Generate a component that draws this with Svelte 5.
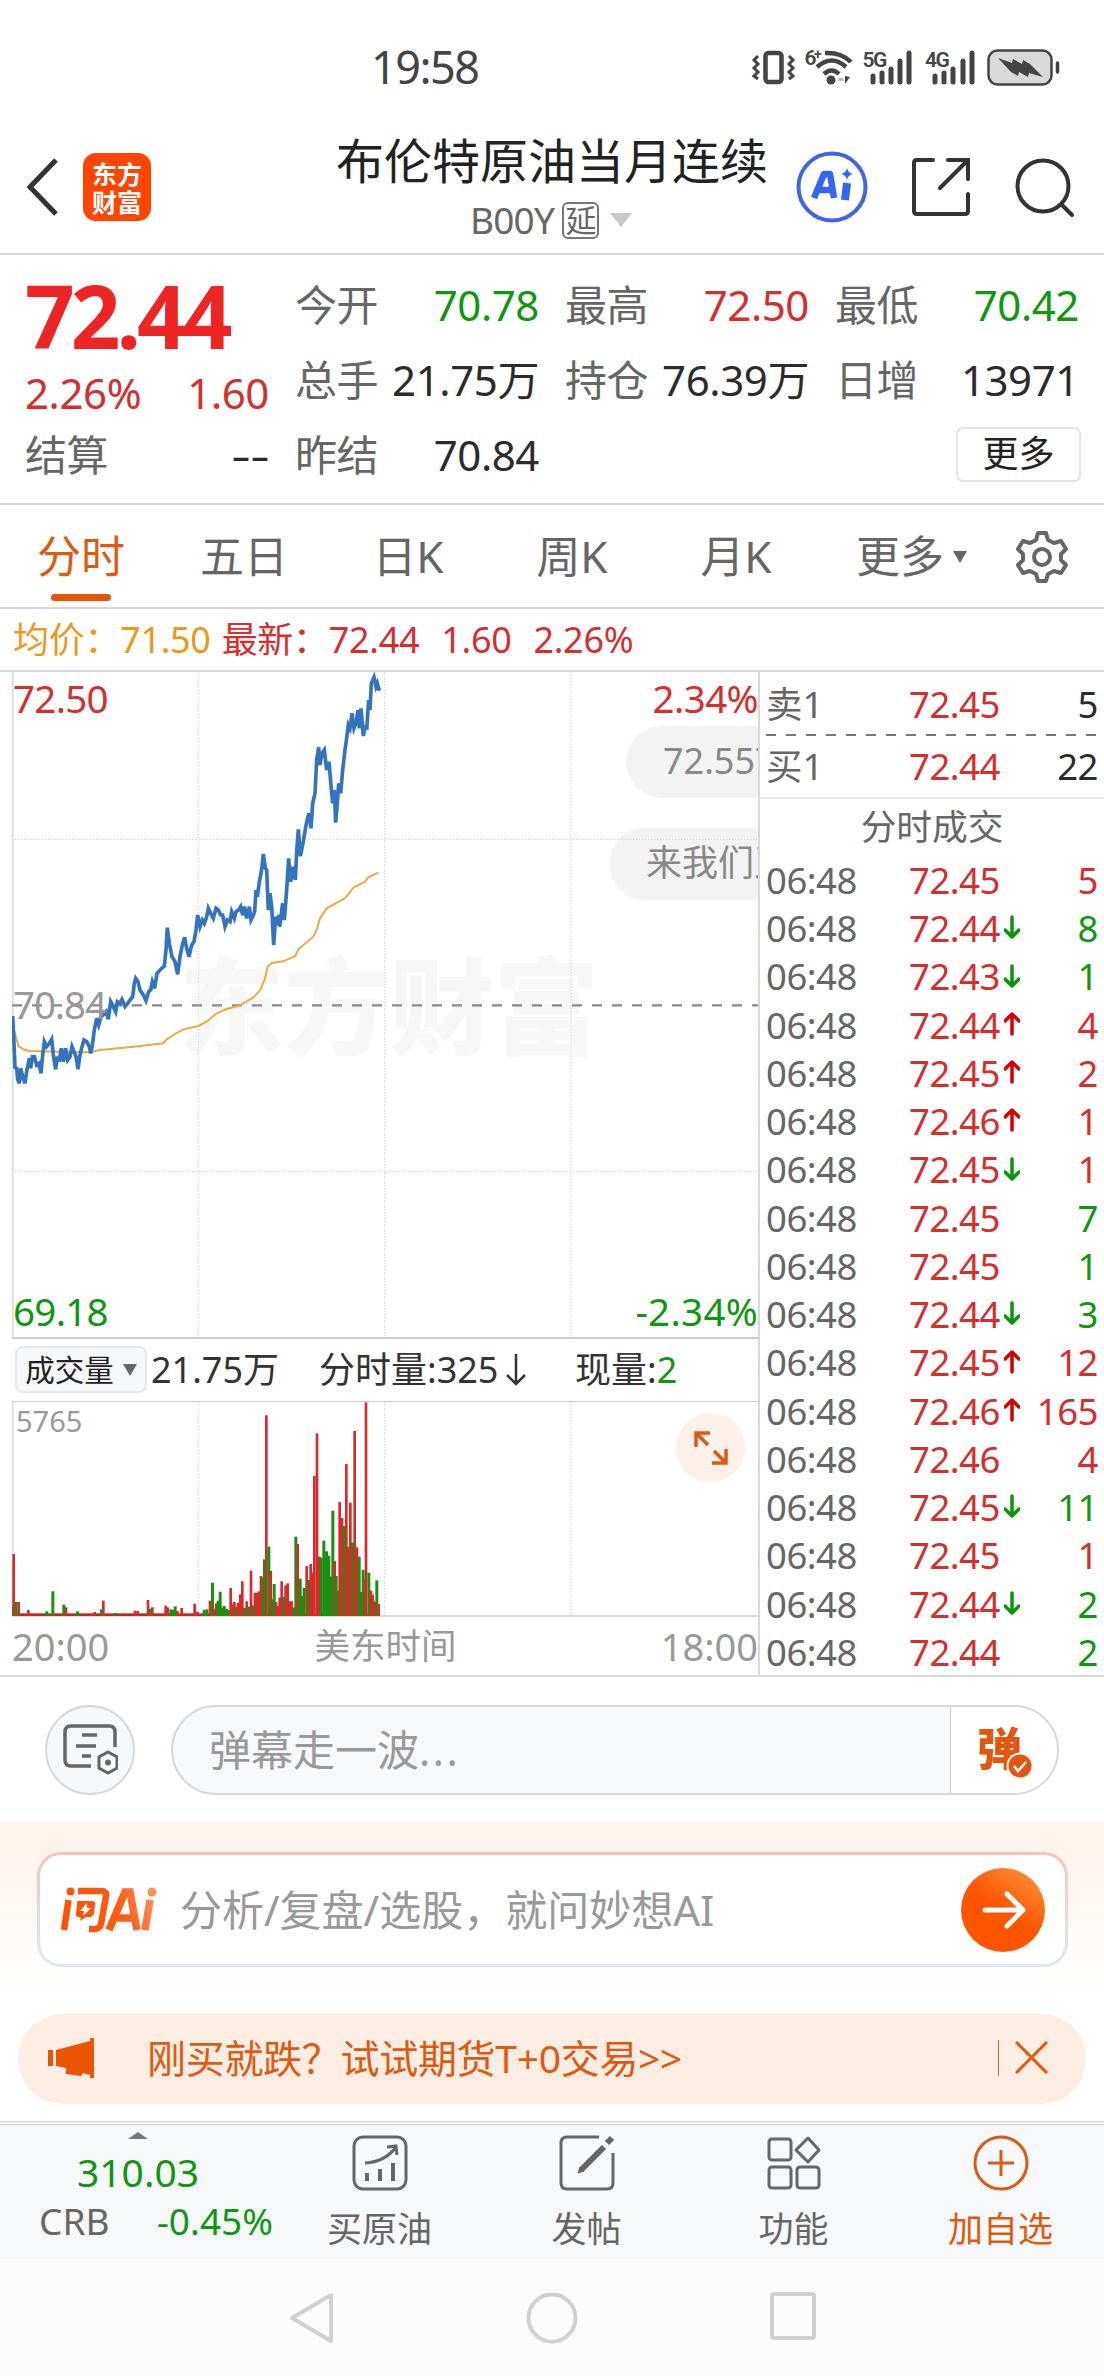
<script lang="ts">
  type Tone = 'red' | 'green' | 'dark';

  const quotes: { label: string; value: string; tone: Tone }[] = [
    { label: '今开', value: '70.78', tone: 'green' },
    { label: '最高', value: '72.50', tone: 'red' },
    { label: '最低', value: '70.42', tone: 'green' },
    { label: '总手', value: '21.75万', tone: 'dark' },
    { label: '持仓', value: '76.39万', tone: 'dark' },
    { label: '日增', value: '13971', tone: 'dark' },
    { label: '昨结', value: '70.84', tone: 'dark' },
  ];

  const tabs = ['分时', '五日', '日K', '周K', '月K'];
  let activeTab = $state('分时');

  // price, volume, tone, direction
  const ticks: [string, number, Tone, string][] = [
    ['72.45', 5, 'red', ''],
    ['72.44', 8, 'green', 'down'],
    ['72.43', 1, 'green', 'down'],
    ['72.44', 4, 'red', 'up'],
    ['72.45', 2, 'red', 'up'],
    ['72.46', 1, 'red', 'up'],
    ['72.45', 1, 'red', 'down'],
    ['72.45', 7, 'green', ''],
    ['72.45', 1, 'green', ''],
    ['72.44', 3, 'green', 'down'],
    ['72.45', 12, 'red', 'up'],
    ['72.46', 165, 'red', 'up'],
    ['72.46', 4, 'red', ''],
    ['72.45', 11, 'green', 'down'],
    ['72.45', 1, 'red', ''],
    ['72.44', 2, 'green', 'down'],
    ['72.44', 2, 'green', ''],
  ];

  // chart units are a third of a pixel
  const priceLine =
    '38,1068 42,1150 45,1222 50,1225 53,1258 58,1270 62,1225 68,1250 75,1270 80,1235 88,1195 92,1225 97,1190 103,1190 110,1215 117,1210 123,1240 128,1185 133,1145 140,1160 148,1150 155,1138 160,1185 167,1228 172,1190 177,1205 184,1165 190,1205 197,1165 203,1200 210,1190 216,1160 222,1175 228,1190 234,1228 240,1185 246,1160 252,1140 260,1145 268,1160 272,1180 277,1155 283,1110 290,1075 296,1095 303,1070 310,1065 318,1055 325,1078 332,1025 340,1040 347,1055 352,1025 360,1030 366,1018 375,1040 382,1032 390,1020 398,1010 403,970 407,955 414,965 420,990 430,1005 438,1022 446,995 452,990 457,965 464,985 471,940 480,930 493,918 498,870 502,803 508,850 516,890 525,905 533,943 540,890 547,855 554,832 560,865 567,890 575,855 582,845 588,810 593,765 600,800 607,780 613,790 620,770 625,745 632,760 640,775 648,745 655,750 662,765 668,765 675,800 682,780 690,785 695,755 703,775 708,755 716,750 722,740 728,765 733,740 740,775 748,740 753,780 758,770 764,755 768,690 772,710 778,665 784,635 790,582 796,625 800,630 805,750 810,700 815,740 821,855 827,770 831,795 836,765 839,800 848,730 853,780 860,690 866,595 872,665 878,620 886,660 890,575 895,508 901,588 908,555 914,520 920,485 927,460 933,505 938,430 945,400 950,300 956,262 960,315 966,280 973,270 980,330 987,305 992,365 998,430 1003,390 1007,488 1012,430 1016,370 1022,400 1028,330 1035,270 1040,235 1045,195 1050,205 1056,160 1062,205 1068,190 1074,150 1078,205 1083,145 1090,228 1096,195 1100,210 1106,120 1110,150 1114,70 1122,52 1128,80 1132,70 1138,92';
  const averageLine =
    '38,1100 48,1130 55,1158 70,1168 88,1173 180,1175 270,1177 300,1170 400,1160 490,1150 500,1138 525,1122 550,1108 595,1098 620,1085 650,1060 680,1047 715,1038 760,1013 782,988 795,955 803,920 815,909 850,904 886,888 895,868 940,830 950,810 960,775 980,745 1035,715 1060,683 1095,665 1105,652 1135,638';

  // x, height, r/g
  const volumes: [number, number, string][] = [
    [38, 28, 'g'], [41, 186, 'r'], [48, 42, 'g'], [56, 42, 'r'], [85, 18, 'r'], [140, 14, 'g'], [158, 74, 'g'],
    [191, 34, 'g'], [198, 26, 'r'], [232, 14, 'g'], [284, 12, 'r'], [304, 20, 'g'], [310, 46, 'r'], [346, 9, 'g'],
    [405, 16, 'r'], [413, 15, 'r'], [444, 48, 'r'], [451, 22, 'g'], [457, 26, 'r'], [497, 31, 'r'], [503, 26, 'r'],
    [512, 20, 'g'], [518, 18, 'g'], [525, 29, 'g'], [532, 15, 'r'], [545, 24, 'r'], [584, 37, 'r'], [592, 13, 'r'],
    [612, 18, 'g'], [620, 20, 'g'], [630, 46, 'r'], [637, 100, 'g'], [643, 20, 'r'], [649, 38, 'r'], [654, 46, 'g'],
    [660, 73, 'g'], [666, 25, 'g'], [672, 30, 'g'], [679, 22, 'g'], [685, 18, 'g'], [692, 84, 'r'], [698, 35, 'r'],
    [703, 42, 'r'], [709, 28, 'g'], [714, 40, 'r'], [721, 65, 'r'], [727, 104, 'r'], [733, 24, 'g'], [740, 44, 'r'],
    [747, 28, 'g'], [753, 136, 'r'], [760, 32, 'g'], [765, 70, 'r'], [771, 70, 'r'], [777, 74, 'r'], [783, 120, 'r'],
    [789, 115, 'g'], [793, 170, 'g'], [799, 602, 'r'], [806, 208, 'g'], [812, 135, 'r'], [818, 50, 'g'], [822, 96, 'g'],
    [828, 42, 'r'], [833, 30, 'r'], [839, 55, 'r'], [845, 104, 'r'], [851, 58, 'g'], [857, 92, 'r'], [863, 98, 'r'],
    [869, 44, 'r'], [875, 44, 'r'], [881, 26, 'g'], [887, 238, 'g'], [893, 216, 'r'], [900, 112, 'g'], [906, 60, 'g'],
    [912, 84, 'g'], [920, 150, 'r'], [926, 108, 'g'], [932, 156, 'r'], [939, 130, 'r'], [943, 420, 'r'], [951, 548, 'r'],
    [958, 178, 'r'], [963, 175, 'g'], [971, 226, 'g'], [979, 194, 'g'], [986, 180, 'g'], [992, 118, 'g'], [998, 316, 'g'],
    [1004, 165, 'r'], [1008, 120, 'g'], [1013, 76, 'g'], [1019, 342, 'r'], [1026, 294, 'r'], [1032, 270, 'g'],
    [1039, 456, 'r'], [1045, 207, 'r'], [1051, 340, 'r'], [1057, 220, 'g'], [1064, 555, 'r'], [1071, 206, 'r'],
    [1077, 178, 'g'], [1083, 72, 'g'], [1089, 138, 'g'], [1094, 110, 'r'], [1098, 641, 'r'], [1106, 130, 'g'],
    [1113, 76, 'r'], [1118, 64, 'r'], [1124, 44, 'r'], [1130, 107, 'g'], [1136, 36, 'r'],
  ];
</script>

{#snippet arrow(dir: string)}
  <svg class="arrow" width="16" height="24" viewBox="0 0 16 24">
    {#if dir === 'up'}
      <path d="M8 22V2M1 9l7-7 7 7" stroke="#d40000" />
    {:else if dir === 'down'}
      <path d="M8 2v20M1 15l7 7 7-7" stroke="#0a950a" />
    {/if}
  </svg>
{/snippet}

<main>
  <div class="status">
    <span class="clock">19:58</span>
    <svg class="status-icons" width="310" height="40" viewBox="750 48 310 40" fill="none" stroke="#444">
      <rect x="765.500" y="53" width="16" height="29" rx="3" stroke-width="4.500" />
      <path d="M758 56l-4 4 4 4-4 4 4 4-4 4 4 3M789 56l4 4-4 4 4 4-4 4 4 4-4 3" stroke-width="3" />
      <path d="M825 53q16-1 26 9M817 67q15-13 29 0M824 74q8-7 15 0" stroke-width="4.500" />
      <circle cx="831" cy="80" r="4.500" fill="#444" stroke="none" />
      <path d="M841 78v3" stroke="#bbb" stroke-width="5" />
      <path d="M845 76v8l5-7z" fill="#444" stroke="none" />
      <g stroke-width="5" stroke-linecap="round">
        <path d="M873 82v-6M882 82v-9M891 82v-13M900 82v-21M909 82V53" />
        <path d="M935 82v-6M944 82v-9M953 82v-13M963 82v-21M972 82V53" />
      </g>
      <rect x="988.500" y="50.500" width="63" height="34" rx="9" fill="#d9d9d9" stroke-width="2.500" />
      <path d="M1057.500 63v9" stroke-width="3.500" stroke-linecap="round" />
      <path d="M998 58l14 5 1-4 9 5 1-4 7 4 13 13-14-4-1 4-9-5-1 4-7-4z" fill="#444" stroke="none" />
      <g class="net"><text x="804.500" y="65">6</text><text class="plus" x="814" y="59">+</text><text x="862.500" y="67">5G</text><text x="925" y="67">4G</text></g>
    </svg>
  </div>

  <header>
    <svg class="back" width="36" height="60" viewBox="0 0 36 60"><path d="M32 3L6 30l26 27" fill="none" stroke="#333" stroke-width="5" /></svg>
    <div class="logo"><span>东方</span><span>财富</span></div>
    <div class="title">
      <h1>布伦特原油当月连续</h1>
      <div class="code">B00Y<span class="delay">延</span><i class="tri"></i></div>
    </div>
    <div class="actions">
      <svg width="72" height="72" viewBox="0 0 72 72">
        <circle cx="36" cy="36" r="33.500" fill="#fff" stroke="#3f66e0" stroke-width="4" />
        <path d="M18 47L28 23h6l4 24M22 39h13" fill="none" stroke="#3565f5" stroke-width="6.500" stroke-linejoin="round" />
        <path d="M51 32l-2 17" stroke="#3565f5" stroke-width="8" />
        <path d="M51 17q1 5 6 6-5 1-6 6-1-5-6-6 5-1 6-6z" fill="#3565f5" />
      </svg>
      <svg class="share" width="60" height="60" viewBox="0 0 60 60" fill="none" stroke="#333" stroke-width="4" stroke-linecap="round">
        <path d="M22 3H6q-3 0-3 3v48q0 3 3 3h48q3 0 3-3V37M37 3h20v19M57 3L29 31" />
      </svg>
      <svg width="62" height="62" viewBox="0 0 62 62" fill="none" stroke="#333" stroke-width="4" stroke-linecap="round">
        <circle cx="29" cy="30" r="25.500" /><path d="M48 49l10 10" />
      </svg>
    </div>
  </header>

  <section class="quote">
    <div class="latest">
      <strong>72.44</strong>
      <div class="pair red"><span>2.26%</span><span>1.60</span></div>
      <div class="pair"><span class="label">结算</span><span class="dark none">--</span></div>
    </div>
    <div class="grid">
      {#each quotes as q}
        <div class="pair"><span class="label">{q.label}</span><span class={q.tone}>{q.value}</span></div>
      {/each}
      <button class="more">更多</button>
    </div>
  </section>

  <nav class="tabs">
    {#each tabs as tab}
      <button class:active={tab === activeTab} onclick={() => (activeTab = tab)}>{tab}</button>
    {/each}
    <button class="more-tab">更多<i class="tri"></i></button>
    <svg class="gear" width="56" height="56" viewBox="0 0 56 56" fill="none" stroke="#666" stroke-width="4" stroke-linejoin="round">
      <path d="M24 4h8l2 7 6 3 7-2 5 8-5 5v6l5 5-5 8-7-2-6 3-2 7h-8l-2-7-6-3-7 2-5-8 5-5v-6l-5-5 5-8 7 2 6-3z" />
      <circle cx="28" cy="28" r="8" />
    </svg>
  </nav>

  <div class="summary">
    <span class="avg">均价：71.50</span><span class="last">最新：72.44</span><span>1.60</span><span>2.26%</span>
  </div>

  <section class="market">
    <div class="charts">
      <div class="price">
        <span class="watermark">东方财富</span>
        <div class="bubble first">72.557</div>
        <div class="bubble second">来我们又</div>
        <svg width="747" height="666" viewBox="36 36 2241 1998" fill="none">
          <g stroke="#d8d8d8" stroke-width="4" stroke-dasharray="4 5">
            <path d="M595 36v1998M1154 36v1998M1713 36v1998M36 538h2241M36 1534h2241" />
          </g>
          <path d="M38 33v2001" stroke="#ddd" stroke-width="6" />
          <path d="M36 1036h2241" stroke="#888" stroke-width="7" stroke-dasharray="30 30" />
          <polyline points={averageLine} stroke="#e9ab45" stroke-width="6" />
          <polyline points={priceLine} stroke="#3374bd" stroke-width="11" />
        </svg>
        <span class="mark top red">72.50</span>
        <span class="mark top right red">2.34%</span>
        <span class="mark middle">70.84</span>
        <span class="mark bottom green">69.18</span>
        <span class="mark bottom right green">-2.34%</span>
      </div>
      <div class="volume-head">
        <button class="indicator">成交量<i class="tri"></i></button>
        <span class="total">21.75万</span>
        <span class="minute">分时量:325<svg width="22" height="34" viewBox="0 0 22 34"><path d="M11 1v30M2 22l9 9 9-9" fill="none" stroke="#333" stroke-width="2.500" /></svg></span>
        <span>现量:<b class="green">2</b></span>
      </div>
      <div class="volume">
        <svg width="747" height="214" viewBox="36 0 2241 642">
          <path d="M595 0v642M1154 0v642M1713 0v642" stroke="#d8d8d8" stroke-width="4" stroke-dasharray="4 5" />
          <path d="M38 0v642" stroke="#ddd" stroke-width="6" />
          <rect x="36" y="634" width="1104" height="8" fill="#c0281c" />
          {#each volumes as [x, h, c]}
            <rect x={x - 4} y={642 - h} width={c === 'r' ? 8 : 9} height={h} fill={c === 'r' ? '#d82a2a' : '#1b8f12'} />
          {/each}
        </svg>
        <span class="max">5765</span>
        <span class="expand">
          <svg width="36" height="36" viewBox="0 0 36 36" fill="none" stroke="#dd5a12" stroke-width="3.500">
            <path d="M3 17V3h14M3 3l12 12M33 19v14H19M33 33L21 21" />
          </svg>
        </span>
      </div>
      <div class="axis"><span>20:00</span><span class="zone">美东时间</span><span>18:00</span></div>
    </div>

    <aside>
      <div class="row book"><span class="label">卖1</span><span class="red">72.45</span><span class="dark qty">5</span></div>
      <svg class="dash" width="332" height="2"><path d="M0 1h332" stroke="#777" stroke-width="2" stroke-dasharray="10 10" /></svg>
      <div class="row book bid"><span class="label">买1</span><span class="red">72.44</span><span class="dark qty">22</span></div>
      <h2>分时成交</h2>
      {#each ticks as [price, qty, tone, dir]}
        <div class="row"><span class="label">06:48</span><span class="red">{price}</span>{@render arrow(dir)}<span class="qty {tone}">{qty}</span></div>
      {/each}
    </aside>
  </section>

  <div class="danmu">
    <button class="round">
      <svg width="56" height="56" viewBox="0 0 56 56" fill="none" stroke="#666" stroke-width="3.500">
        <path d="M29 44H9q-6 0-6-6V10q0-6 6-6h38q6 0 6 6v15M20 13h15M14 24h20M20 34h9" />
        <path d="M46 30l9 5v11l-9 5-9-5V35z" stroke-width="3" /><circle cx="46" cy="40.500" r="3" fill="#666" stroke="none" />
      </svg>
    </button>
    <div class="field">
      <span>弹幕走一波<span class="dots">...</span></span>
      <div class="send">
        弹
        <svg width="28" height="28" viewBox="0 0 28 28"><circle cx="14" cy="14" r="12.500" fill="#e2570f" stroke="#fff" stroke-width="2" /><path d="M8 14l4 5 8-9" fill="none" stroke="#fff" stroke-width="2.500" /></svg>
      </div>
    </div>
  </div>

  <section class="ask">
    <div class="card">
      <svg width="98" height="46" viewBox="0 0 98 46" fill="none" stroke="url(#ask)" stroke-width="7">
        <defs>
          <linearGradient id="ask" gradientUnits="userSpaceOnUse" x1="0" y1="40" x2="98" y2="0">
            <stop offset="0" stop-color="#ff5000" /><stop offset="0.600" stop-color="#ff5d15" /><stop offset="1" stop-color="#ff9a6a" />
          </linearGradient>
        </defs>
        <path d="M8.500 13L4 43M18 4h23q6 0 5 5l-5 28q-1 5-7 5h-5" stroke-width="6.500" />
        <circle cx="10.500" cy="4.500" r="4" fill="url(#ask)" stroke="none" />
        <path d="M18 14h14q4 0 3 4l-1 8q-1 4-4 4h-4l-6 4 1-4h-2q-4 0-3-4l1-8q0-4 1-4z" fill="url(#ask)" stroke="none" />
        <path d="M27 16l-7 8h4l-1 5 8-8h-4z" fill="#fff" stroke="none" />
        <path d="M49 43L65 5h5l7 38M57 31h17M90 13l-5 30" stroke-width="7.500" />
        <circle cx="92" cy="5" r="4.500" fill="url(#ask)" stroke="none" />
      </svg>
      <span>分析/复盘/选股，就问妙想AI</span>
      <button class="go"><svg width="84" height="84" viewBox="0 0 84 84" fill="none" stroke="#fff" stroke-width="5" stroke-linecap="round" stroke-linejoin="round"><path d="M24 42h38M46 26l16 16-16 16" /></svg></button>
    </div>
  </section>

  <div class="banner">
    <svg width="48" height="40" viewBox="0 0 48 40" fill="#e95504"><path d="M0 12h5v16H0zM8 12L42 3V0h4v40h-4v-3l-7-2-2 3-15-2v-6l-10-2z" /></svg>
    <span>刚买就跌？试试期货T+0交易&gt;&gt;</span>
    <i></i>
    <svg width="33" height="33" viewBox="0 0 33 33"><path d="M1 1l31 31M32 1L1 32" stroke="#dd5a12" stroke-width="3" /></svg>
  </div>

  <footer>
    <div class="index">
      <i class="caret"></i>
      <span class="green value">310.03</span>
      <div class="change"><span>CRB</span><span class="green">-0.45%</span></div>
    </div>
    <div class="item">
      <svg width="56" height="56" viewBox="0 0 56 56" fill="none" stroke="#666" stroke-width="3">
        <rect x="2" y="2" width="52" height="52" rx="9" /><path d="M13 28q20-1 31-16M35 12l9-1 1 9" /><path d="M15 38v8M28 34v12M41 28v18" stroke-width="4" />
      </svg>
      <span>买原油</span>
    </div>
    <div class="item">
      <svg width="56" height="56" viewBox="0 0 56 56" fill="none" stroke="#666" stroke-width="3">
        <path d="M40 2H8q-6 0-6 6v40q0 6 6 6h40q6 0 6-6V18" /><path d="M22 35l23-23M48 8l5-5" stroke-width="6" /><path d="M19 38l2-6 4 4z" fill="#666" stroke-width="1" />
      </svg>
      <span>发帖</span>
    </div>
    <div class="item">
      <svg width="56" height="56" viewBox="0 0 56 56" fill="none" stroke="#666" stroke-width="3">
        <rect x="3" y="4" width="22" height="21" rx="3" /><rect x="3" y="32" width="22" height="21" rx="3" /><rect x="31" y="32" width="22" height="21" rx="3" />
        <path d="M42 3l11 12-11 12-12-12z" stroke-linejoin="round" />
      </svg>
      <span>功能</span>
    </div>
    <div class="item add">
      <svg width="56" height="56" viewBox="0 0 56 56" fill="none" stroke="#dd5a12" stroke-width="3"><circle cx="28" cy="28" r="26" /><path d="M28 15v26M15 28h26" /></svg>
      <span>加自选</span>
    </div>
  </footer>

  <div class="system">
    <svg width="46" height="52" viewBox="0 0 46 52"><path d="M43 3v46L4 26z" /></svg>
    <svg width="52" height="52" viewBox="0 0 52 52"><circle cx="26" cy="26" r="23.500" /></svg>
    <svg width="46" height="48" viewBox="0 0 46 48"><rect x="2" y="2" width="42" height="44" rx="2" /></svg>
  </div>
</main>

<style>
  :global(body) {
    background: #fff;
  }
  main {
    width: 1104px;
    height: 2376px;
    display: flex;
    flex-direction: column;
    overflow: hidden;
    background: #fff;
    color: #333;
    font-family: "Noto Sans", "Noto Sans CJK SC", sans-serif;
    line-height: 1;
  }
  main * {
    box-sizing: border-box;
  }
  button {
    border: 0;
    padding: 0;
    background: none;
    color: inherit;
    font: inherit;
  }
  svg {
    display: block;
    flex: none;
  }
  .red { color: #d42f2f; }
  .green { color: #119611; }
  .dark { color: #2b2b2b; }
  .label { color: #666; }
  .tri {
    display: inline-block;
    border: 7px solid transparent;
    border-top: 12px solid #666;
    border-bottom: 0;
  }

  .status {
    height: 106px;
    flex: none;
    display: flex;
    align-items: center;
    padding: 30px 44px 0 371px;
    justify-content: space-between;
  }
  .clock {
    font-size: 45px;
    letter-spacing: -1.5px;
    margin-top: -3px;
    color: #444;
  }
  .net {
    font: 600 21px "Roboto", sans-serif;
    fill: #444;
    stroke: none;
    letter-spacing: -1.5px;
  }
  .plus { font-size: 14px; }

  header {
    height: 149px;
    flex: none;
    display: flex;
    border-bottom: 2px solid #d8d8d8;
    padding-left: 24px;
  }
  .back { margin-top: 51px; }
  .logo {
    width: 68px;
    height: 68px;
    margin: 47px 0 0 23px;
    border-radius: 13px;
    background: #ff4500;
    color: #fff;
    font: 700 25px/28px "Noto Sans CJK SC", sans-serif;
    display: flex;
    flex-direction: column;
    align-items: center;
    justify-content: center;
  }
  .title {
    width: 434px;
    margin: 29px 0 0 185px;
  }
  h1 {
    margin: 0;
    font-size: 48px;
    line-height: 52px;
    font-weight: 400;
    color: #222;
    white-space: nowrap;
  }
  .code {
    display: flex;
    align-items: center;
    justify-content: center;
    margin: 14px 0 0 -4px;
    font-size: 37px;
    line-height: 38px;
    letter-spacing: -0.8px;
    color: #666;
  }
  .delay {
    width: 37px;
    height: 37px;
    margin: 0 11px 0 8px;
    border: 2px solid #777;
    border-radius: 6px;
    font-size: 31px;
    line-height: 32px;
    text-align: center;
  }
  .code .tri {
    border-width: 14px 11px 0;
    border-top-color: #c8c8c8;
  }
  .actions {
    display: flex;
    align-items: center;
    margin: 18px 0 0 26px;
    height: 126px;
  }
  .share { margin: 0 43px 0 43px; }

  .quote {
    height: 250px;
    flex: none;
    display: flex;
    border-bottom: 2px solid #d8d8d8;
    padding: 12px 25px 0;
    font-size: 42px;
  }
  .latest {
    width: 244px;
    margin-right: 26px;
  }
  .latest strong {
    display: block;
    height: 100px;
    font-size: 87px;
    line-height: 97px;
    letter-spacing: -4px;
    color: #ee2525;
  }
  .latest .pair { height: 51px; }
  .latest .pair + .pair { height: 74px; }
  .pair {
    display: flex;
    align-items: center;
    justify-content: space-between;
    letter-spacing: -0.4px;
  }
  .none {
    transform: scaleX(1.45);
    transform-origin: right;
  }
  .grid {
    flex: 1;
    display: grid;
    grid-template-columns: repeat(3, 244px);
    grid-auto-rows: 75px;
    column-gap: 26px;
  }
  .more {
    grid-column: 3;
    justify-self: end;
    align-self: center;
    width: 125px;
    height: 55px;
    margin-right: -2px;
    border: 2px solid #e4e4e4;
    border-radius: 7px;
    padding-bottom: 2px;
    font-size: 36px;
    color: #222;
  }

  .tabs {
    height: 104px;
    flex: none;
    display: flex;
    border-bottom: 2px solid #d8d8d8;
    font-size: 44px;
    color: #666;
  }
  .tabs button {
    position: relative;
    width: 164px;
    height: 104px;
    padding-bottom: 2px;
  }
  .tabs button:first-child { width: 162px; }
  .tabs .active { color: #dd5a12; }
  .active::after {
    content: "";
    position: absolute;
    left: 51px;
    bottom: 8px;
    width: 60px;
    height: 7px;
    border-radius: 4px;
    background: #e55509;
  }
  .tabs .more-tab {
    width: 192px;
    padding-right: 5px;
  }
  .more-tab .tri {
    margin-left: 9px;
    vertical-align: 10px;
  }
  .gear { margin: 24px 0 0 4px; }

  .summary {
    height: 61px;
    flex: none;
    display: flex;
    align-items: center;
    padding-left: 13px;
    font-size: 36px;
    letter-spacing: -0.3px;
    color: #d42f2f;
    white-space: nowrap;
  }
  .summary span { margin-right: 22px; }
  .summary .avg {
    margin-right: 11px;
    color: #e99a1d;
  }

  .market {
    height: 1007px;
    flex: none;
    display: flex;
    border-top: 2px solid #d8d8d8;
    border-bottom: 2px solid #d8d8d8;
  }
  .charts {
    width: 760px;
    padding-left: 12px;
    border-right: 2px solid #d8d8d8;
  }
  .price {
    position: relative;
    height: 667px;
    border-bottom: 2px solid #ccc;
    overflow: hidden;
  }
  .price svg {
    position: relative;
  }
  .mark {
    position: absolute;
    left: 1px;
    font-size: 38.5px;
    line-height: 40px;
    letter-spacing: -0.7px;
  }
  .mark.right {
    left: auto;
    right: 0;
    letter-spacing: -0.6px;
  }
  .mark.top { top: 6px; }
  .mark.middle {
    top: 312px;
    color: #999;
    letter-spacing: -1.1px;
  }
  .mark.bottom { bottom: 6px; }
  .mark.bottom.right { letter-spacing: 0.3px; }
  .bubble {
    position: absolute;
    right: 0;
    height: 72px;
    padding-left: 37px;
    border-radius: 36px 0 0 36px;
    background: #f3f3f3;
    color: #888;
    font-size: 36px;
    line-height: 69px;
    white-space: nowrap;
    overflow: hidden;
  }
  .first {
    top: 54px;
    width: 132px;
  }
  .second {
    top: 156px;
    width: 149px;
  }
  .watermark {
    position: absolute;
    left: 167px;
    top: 276px;
    font: 900 105px/105px "Noto Sans CJK SC", sans-serif;
    color: #f7f7f7;
  }
  .volume-head {
    height: 62px;
    display: flex;
    align-items: center;
    padding: 0 0 1px 3px;
    font-size: 36px;
  }
  .indicator {
    width: 132px;
    height: 47px;
    margin-right: 4px;
    border: 2px solid #e5e7ea;
    border-radius: 8px;
    background: #f6f7f9;
    font-size: 29.5px;
    color: #222;
    white-space: nowrap;
  }
  .indicator .tri {
    margin-left: 9px;
    vertical-align: 5px;
  }
  .total { width: 168px; }
  .minute {
    display: flex;
    align-items: center;
    gap: 7px;
    width: 256px;
  }
  .volume-head b { font-weight: 400; }
  .volume {
    position: relative;
    height: 216px;
    border-top: 1px solid #ccc;
    border-bottom: 2px solid #ddd;
  }
  .max {
    position: absolute;
    left: 4px;
    top: 4px;
    font-size: 29px;
    line-height: 30px;
    color: #999;
  }
  .expand {
    position: absolute;
    right: 13px;
    top: 11px;
    width: 69px;
    height: 69px;
    border-radius: 50%;
    background: #fdf0e8;
    display: flex;
    align-items: center;
    justify-content: center;
  }
  .axis {
    display: flex;
    justify-content: space-between;
    align-items: center;
    height: 58px;
    font-size: 38px;
    color: #999;
  }
  .zone {
    font-size: 35.5px;
    margin-left: 1px;
  }
  aside {
    flex: 1;
    padding-left: 6px;
    font-size: 36.5px;
  }
  .row {
    height: 48.25px;
    display: flex;
    align-items: center;
    padding-right: 6px;
    letter-spacing: -0.5px;
  }
  .row .label { width: 143px; }
  .book { height: 62px; }
  .book .label { letter-spacing: 0; }
  .row.book:first-child { padding-top: 3px; }
  .bid { height: 61px; }
  .arrow {
    margin: -2px 0 0 4px;
    fill: none;
    stroke-width: 3.5;
    stroke-linecap: round;
    stroke-linejoin: round;
  }
  .qty { margin-left: auto; }
  h2 {
    margin: 0 0 0 -6px;
    height: 59px;
    border-top: 2px solid #e8e8e8;
    text-align: center;
    font-size: 35.7px;
    line-height: 55px;
    font-weight: 400;
    color: #666;
  }

  .danmu {
    height: 145px;
    flex: none;
    display: flex;
    padding: 28px 45px 0;
    gap: 36px;
  }
  .round {
    width: 90px;
    height: 90px;
    border: 2px solid #d5d8dc;
    border-radius: 50%;
    background: #f6f7f9;
    display: flex;
    align-items: center;
    justify-content: center;
  }
  .field {
    width: 888px;
    height: 90px;
    border: 2px solid #d5d8dc;
    border-radius: 45px;
    background: #f6f8fa;
    display: flex;
    align-items: center;
    justify-content: space-between;
    padding-left: 36px;
    overflow: hidden;
    font-size: 42px;
    color: #999;
  }
  .dots { letter-spacing: 2.5px; }
  .send {
    position: relative;
    width: 107px;
    height: 86px;
    padding-left: 26px;
    border-left: 1px solid #ccc;
    background: #fff;
    color: #e2570f;
    font-size: 45px;
    font-weight: 900;
    line-height: 84px;
  }
  .send svg {
    position: absolute;
    left: 55px;
    top: 45px;
  }

  .ask {
    height: 192px;
    flex: none;
    padding: 30px 36px 0 37px;
    background: linear-gradient(#fff1eb, #fff 92%);
  }
  .card {
    height: 115px;
    border: 3px solid transparent;
    border-radius: 24px;
    background: linear-gradient(#fff, #fff) padding-box, linear-gradient(#f3c6bd, #dfe8f3) border-box;
    display: flex;
    align-items: center;
    padding: 0 20px;
    font-size: 42px;
    color: #999;
  }
  .card span { margin-left: 22px; }
  .go {
    margin-left: auto;
    border-radius: 50%;
    background: linear-gradient(35deg, #ff5500 50%, #ff9a48);
  }

  .banner {
    height: 90px;
    flex: none;
    margin: 0 18px;
    padding: 0 38px 3px 30px;
    border-radius: 45px;
    background: #fcede3;
    display: flex;
    align-items: center;
    font-size: 39px;
    color: #dd5a12;
  }
  .banner span {
    margin-left: 51px;
    letter-spacing: -0.3px;
  }
  .banner i {
    width: 1px;
    height: 36px;
    margin: 0 16px 0 auto;
    background: #c86a35;
  }

  footer {
    height: 138px;
    flex: none;
    margin-top: 17px;
    display: flex;
    border-top: 4px double #d0d2d5;
    background: #f6f8fa;
    color: #666;
  }
  .index {
    width: 276px;
    display: flex;
    flex-direction: column;
    align-items: center;
  }
  .caret {
    margin-top: 7px;
    border: 10px solid transparent;
    border-bottom: 7px solid #777;
    border-top: 0;
  }
  .value {
    margin-top: 13px;
    font-size: 39px;
  }
  .change {
    align-self: stretch;
    display: flex;
    justify-content: space-between;
    padding: 0 3px 0 39px;
    margin-top: 11px;
    font-size: 37px;
  }
  .item {
    width: 207px;
    display: flex;
    flex-direction: column;
    align-items: center;
    gap: 20px;
    padding-top: 10px;
    font-size: 35px;
  }
  .add { color: #dd5a12; }

  .system {
    flex: 1;
    display: flex;
    justify-content: space-between;
    padding: 33px 288px 0;
    background: #fcfcfc;
  }
  .system svg {
    fill: none;
    stroke: #d0d0d0;
    stroke-width: 4;
    stroke-linejoin: round;
  }
</style>
